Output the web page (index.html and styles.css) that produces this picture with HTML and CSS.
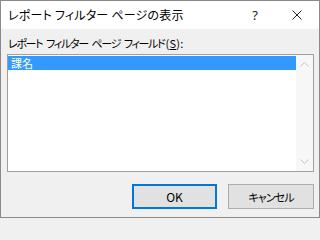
FILE: index.html
```html
<!DOCTYPE html>
<html lang="ja">
<head>
<meta charset="utf-8">
<link rel="stylesheet" href="styles.css">
</head>
<body>
<div class="window">
  <div class="titlebar">
    <span class="title">レポート フィルター ページの表示</span>
    <span class="help">?</span>
    <span class="close">
      <svg width="10" height="10" viewBox="0 0 10 10"><path d="M0.5 0.5 L9.5 9.5 M9.5 0.5 L0.5 9.5" stroke="#222" stroke-width="1" fill="none"/></svg>
    </span>
  </div>
  <div class="content">
    <div class="label">レポート フィルター ページ フィールド<span class="key">(<u>S</u>):</span></div>
    <div class="listbox">
      <div class="items">
        <div class="item selected">課名</div>
      </div>
      <div class="scrollbar">
        <svg class="arrow" width="9" height="5" viewBox="0 0 9 5"><path d="M0.5 4.5 L4.5 0.5 L8.5 4.5" stroke="#c2c2c2" stroke-width="1" fill="none"/></svg>
        <svg class="arrow" width="9" height="5" viewBox="0 0 9 5"><path d="M0.5 0.5 L4.5 4.5 L8.5 0.5" stroke="#c2c2c2" stroke-width="1" fill="none"/></svg>
      </div>
    </div>
    <div class="buttons">
      <button class="btn default">OK</button>
      <button class="btn cancel">キャンセル</button>
    </div>
  </div>
</div>
</body>
</html>
```

FILE: styles.css
```css
html, body {
  margin: 0;
  padding: 0;
  background: #f0f0f0;
}
body {
  font-family: "Noto Sans CJK JP", "Noto Sans", sans-serif;
  font-size: 12px;
  font-feature-settings: "palt";
  color: #000;
}
.window {
  width: 320px;
  height: 218px;
  box-sizing: border-box;
  border: 1px solid #8a8a8a;
  background: #f0f0f0;
  display: flex;
  flex-direction: column;
}
.titlebar {
  height: 28px;
  background: #fff;
  display: flex;
  align-items: center;
  padding-left: 7px;
}
.title {
  flex: 1;
  line-height: 16px;
  letter-spacing: 0.2px;
}
.help {
  width: 12px;
  text-align: center;
  font-family: "Noto Sans", sans-serif;
  font-size: 13px;
  margin-right: 31px;
  color: #222;
}
.close {
  width: 10px;
  height: 10px;
  display: flex;
  margin-right: 17px;
  margin-top: -1px;
}
.content {
  flex: 1;
  display: flex;
  flex-direction: column;
  padding: 6px 5px 0 6px;
}
.label {
  font-size: 11px;
  line-height: 16px;
  height: 16px;
  margin-bottom: 3px;
  letter-spacing: -1.3px;
  word-spacing: 2.5px;
  padding-left: 1px;
}
.label .key {
  letter-spacing: 0.2px;
  margin-left: 1px;
}
.label u {
  text-underline-offset: 1px;
}
.listbox {
  height: 118px;
  box-sizing: border-box;
  border: 1px solid #a0a0a0;
  background: #fff;
  display: flex;
}
.items {
  flex: 1;
  padding: 1px 0 0 0;
}
.item {
  height: 14px;
  line-height: 14px;
  padding-left: 3px;
  font-size: 11px;
}
.item.selected {
  background: #3399ff;
  color: #fff;
}
.scrollbar {
  width: 17px;
  background: #f7f7f7;
  display: flex;
  flex-direction: column;
  justify-content: space-between;
  align-items: center;
  padding: 7px 0 7px 0;
}
.arrow {
  display: block;
}
.buttons {
  display: flex;
  justify-content: flex-end;
  gap: 11px;
  margin-top: 12px;
}
.btn {
  width: 86px;
  height: 25px;
  box-sizing: border-box;
  border: 1px solid #adadad;
  background: #e1e1e1;
  font-family: "Noto Sans CJK JP", "Noto Sans", sans-serif;
  font-size: 12px;
  font-feature-settings: "palt";
  color: #000;
  padding: 0;
  margin: 0;
}
.btn.default {
  border: 2px solid #0078d7;
  width: 85px;
}
.btn.cancel {
  font-size: 11px;
  letter-spacing: -0.9px;
}
```
